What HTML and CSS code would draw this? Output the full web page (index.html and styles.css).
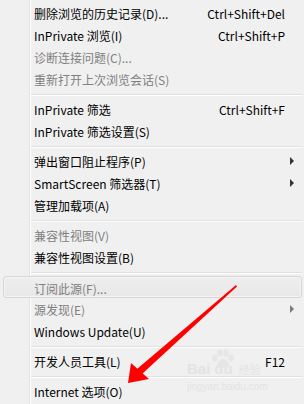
FILE: index.html
```html
<!DOCTYPE html>
<html lang="zh-CN">
<head>
    <meta charset="UTF-8">
    <title>工具菜单</title>
    <link rel="stylesheet" href="styles.css">
</head>
<body>
    <div class="menu">
        <div class="watermark">
            <div class="wm-logo">
                <span>Bai</span>
                <span class="wm-du">
                    <svg class="paw" width="26" height="20" viewBox="0 0 26 20">
                        <ellipse cx="5" cy="9" rx="2.8" ry="3.4"/>
                        <ellipse cx="10" cy="4" rx="2.8" ry="3.4"/>
                        <ellipse cx="16" cy="4" rx="2.8" ry="3.4"/>
                        <ellipse cx="21" cy="9" rx="2.8" ry="3.4"/>
                        <path d="M13 10 C9 10 6 15 7 18 C8 20 11 19 13 19 C15 19 18 20 19 18 C20 15 17 10 13 10 Z"/>
                    </svg>
                    du
                </span>
                <span class="wm-cn">经验</span>
            </div>
            <div class="wm-url">jingyan.baidu.com</div>
        </div>

        <div class="item"><span class="label">删除浏览的历史记录(D)...</span><span class="key">Ctrl+Shift+Del</span><span class="sub"></span></div>
        <div class="item"><span class="label">InPrivate 浏览(I)</span><span class="key">Ctrl+Shift+P</span><span class="sub"></span></div>
        <div class="item disabled"><span class="label">诊断连接问题(C)...</span><span class="key"></span><span class="sub"></span></div>
        <div class="item disabled"><span class="label">重新打开上次浏览会话(S)</span><span class="key"></span><span class="sub"></span></div>
        <div class="sep"></div>
        <div class="item"><span class="label">InPrivate 筛选</span><span class="key">Ctrl+Shift+F</span><span class="sub"></span></div>
        <div class="item"><span class="label">InPrivate 筛选设置(S)</span><span class="key"></span><span class="sub"></span></div>
        <div class="sep"></div>
        <div class="item"><span class="label">弹出窗口阻止程序(P)</span><span class="key"></span><span class="sub"><i class="tri"></i></span></div>
        <div class="item"><span class="label">SmartScreen 筛选器(T)</span><span class="key"></span><span class="sub"><i class="tri"></i></span></div>
        <div class="item"><span class="label">管理加载项(A)</span><span class="key"></span><span class="sub"></span></div>
        <div class="sep"></div>
        <div class="item disabled"><span class="label">兼容性视图(V)</span><span class="key"></span><span class="sub"></span></div>
        <div class="item"><span class="label">兼容性视图设置(B)</span><span class="key"></span><span class="sub"></span></div>
        <div class="sep"></div>
        <div class="item disabled hover"><span class="label">订阅此源(F)...</span><span class="key"></span><span class="sub"></span></div>
        <div class="item disabled"><span class="label">源发现(E)</span><span class="key"></span><span class="sub"><i class="tri"></i></span></div>
        <div class="item"><span class="label">Windows Update(U)</span><span class="key"></span><span class="sub"></span></div>
        <div class="sep"></div>
        <div class="item"><span class="label">开发人员工具(L)</span><span class="key">F12</span><span class="sub"></span></div>
        <div class="sep"></div>
        <div class="item"><span class="label">Internet 选项(O)</span><span class="key"></span><span class="sub"></span></div>

        <svg class="pointer" width="304" height="404" viewBox="0 0 304 404">
            <polygon points="236,285 237,286.5 142,374 137,369" fill="#ff0000"/>
            <polygon points="128,383 131,363 149,379" fill="#ff0000"/>
        </svg>
    </div>
</body>
</html>
```

FILE: styles.css
```css
body {
    margin: 0;
    background: #f0f0f0;
    font-family: "Noto Sans CJK SC", "Noto Sans", sans-serif;
    font-size: 12px;
    color: #000;
}
.menu {
    position: relative;
    width: 304px;
    height: 404px;
    padding-top: 2px;
    box-sizing: border-box;
    background-image: linear-gradient(to right, transparent 29px, #e2e3e3 29px, #e2e3e3 30px, #ffffff 30px, #ffffff 31px, transparent 31px);
    overflow: hidden;
}
.item {
    position: relative;
    z-index: 1;
    display: grid;
    grid-template-columns: 1fr auto 19px;
    align-items: center;
    height: 22px;
    padding-left: 34px;
    box-sizing: border-box;
    white-space: nowrap;
}
.item.disabled {
    color: #808080;
}
.item.hover {
    margin: 0 2px 0 3px;
    padding-left: 30px;
    border: 1px solid #d6d6d6;
    border-radius: 3px;
    background: linear-gradient(#eeeeee, #e8e8e8);
    box-shadow: inset 0 0 0 1px #f4f4f4;
}
.item.hover .sub {
    width: 16px;
}
.key {
    text-align: right;
}
.sub {
    position: relative;
    height: 22px;
}
.tri {
    position: absolute;
    left: 5px;
    top: 7px;
    width: 0;
    height: 0;
    border-top: 4px solid transparent;
    border-bottom: 4px solid transparent;
    border-left: 4px solid #333;
}
.disabled .tri {
    border-left-color: #7a7a7a;
}
.sep {
    position: relative;
    z-index: 1;
    height: 8px;
    margin: 0 2px 0 31px;
    background: linear-gradient(transparent 4px, #e0e0e0 4px, #e0e0e0 5px, #ffffff 5px, #ffffff 6px, transparent 6px);
}
.watermark {
    position: absolute;
    z-index: 0;
    left: 187px;
    top: 361px;
    color: #e3e3e3;
    font-family: "Liberation Sans", sans-serif;
}
.wm-logo {
    display: flex;
    align-items: flex-end;
    font-size: 15px;
    font-weight: bold;
    line-height: 16px;
}
.wm-du {
    position: relative;
    margin-left: 4px;
}
.paw {
    position: absolute;
    left: -4px;
    top: -12px;
    fill: #e6e6e6;
}
.wm-cn {
    margin-left: 6px;
    font-family: "Noto Sans CJK SC", sans-serif;
    font-size: 11px;
    font-weight: normal;
}
.wm-url {
    margin-top: 4px;
    font-size: 10px;
    line-height: 11px;
}
.pointer {
    position: absolute;
    z-index: 2;
    left: 0;
    top: 0;
}
```
